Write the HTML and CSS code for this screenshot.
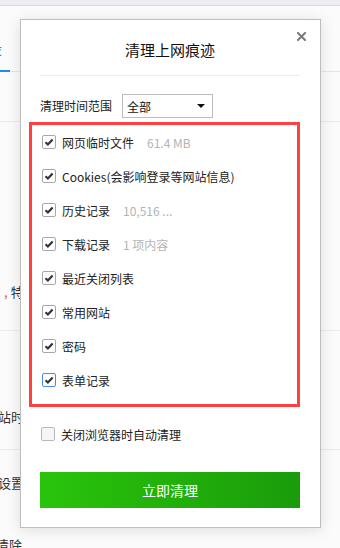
FILE: index.html
```html
<!DOCTYPE html>
<html lang="zh-CN">
<head>
<meta charset="utf-8">
<title>清理上网痕迹</title>
<link rel="stylesheet" href="styles.css">
</head>
<body>
<div class="page">
  <div class="topbar"></div>
  <div class="tabs"><span class="tab-active"><span class="tab-text">设</span></span></div>
  <div class="bg-sec s1"></div>
  <div class="bg-sec s2"><p class="bg-text"><span class="red">,</span>特别</p></div>
  <div class="bg-sec s3"><p class="bg-text t3">站时间</p></div>
  <div class="bg-sec s4"><p class="bg-text t4">设置选项</p><p class="bg-text t5">清除</p></div>

  <div class="dialog">
    <button class="close" aria-label="关闭">
      <svg width="9" height="9" viewBox="0 0 9 9"><path d="M1 1L8 8M8 1L1 8" stroke="#7a7a7a" stroke-width="2" stroke-linecap="square"/></svg>
    </button>
    <div class="header">清理上网痕迹</div>
    <div class="range">
      <span class="range-label">清理时间范围</span>
      <div class="select"><span>全部</span><svg class="caret" width="8" height="4" viewBox="0 0 8 4"><path d="M0 0H8L4 4Z" fill="#111"/></svg></div>
    </div>
    <div class="items">
      <label class="item"><span class="cb on"></span><span class="name">网页临时文件</span><span class="meta">61.4 MB</span></label>
      <label class="item"><span class="cb on"></span><span class="name">Cookies(会影响登录等网站信息)</span></label>
      <label class="item"><span class="cb on"></span><span class="name">历史记录</span><span class="meta">10,516 ...</span></label>
      <label class="item"><span class="cb on"></span><span class="name">下载记录</span><span class="meta">1 项内容</span></label>
      <label class="item"><span class="cb on"></span><span class="name">最近关闭列表</span></label>
      <label class="item"><span class="cb on"></span><span class="name">常用网站</span></label>
      <label class="item"><span class="cb on"></span><span class="name">密码</span></label>
      <label class="item"><span class="cb on focus"></span><span class="name">表单记录</span></label>
    </div>
    <label class="auto"><span class="cb off"></span><span class="name">关闭浏览器时自动清理</span></label>
    <button class="go">立即清理</button>
  </div>
</div>
</body>
</html>
```
FILE: styles.css
```css
* { box-sizing: border-box; }
html, body { margin: 0; padding: 0; }
body {
  width: 340px;
  height: 548px;
  overflow: hidden;
  font-family: "Noto Sans CJK SC", "Microsoft YaHei", sans-serif;
  color: #222;
  background: #fbfbfb;
}
.page {
  position: relative;
  width: 340px;
  height: 548px;
  overflow: hidden;
  background: #fbfbfb;
}
.topbar {
  height: 6px;
  background: #eeeef2;
  border-bottom: 1px solid #d9d9dd;
}
.tabs {
  height: 66px;
  border-bottom: 1px solid #e6e6e6;
  display: flex;
  align-items: flex-end;
}
.tab-active {
  display: block;
  width: 10px;
  height: 32px;
  border-bottom: 2px solid #1a8cf0;
  margin-bottom: -1px;
  overflow: visible;
  position: relative;
}
.tab-text {
  display: block;
  margin-left: -12px;
  font-size: 14px;
  line-height: 16px;
  color: #1a8cf0;
}
.bg-sec {
  border-bottom: 1px solid #ececec;
  font-size: 13px;
  color: #333;
}
.s1 { height: 50px; }
.s2 { height: 209px; padding-top: 161px; }
.s3 { height: 119px; padding-top: 77px; }
.s4 { height: 120px; padding-top: 24px; border-bottom: 0; }
.bg-text { margin: 0; line-height: 18px; white-space: nowrap; }
.bg-text .red { color: #f05a28; margin: 0 3px 0 4px; }
.t3, .t4 { margin-left: -2px; }
.t5 { margin-top: 44px; margin-left: -4px; }

.dialog {
  position: absolute;
  left: 20px;
  top: 19px;
  width: 301px;
  height: 509px;
  background: #fff;
  border: 1px solid #bdbdbd;
  box-shadow: 0 2px 14px rgba(0,0,0,0.12);
  padding: 20px 20px 0 19px;
  display: flex;
  flex-direction: column;
}
.close {
  position: absolute;
  top: 12px;
  right: 14px;
  width: 9px;
  height: 9px;
  padding: 0;
  border: 0;
  background: none;
  display: block;
}
.close svg { display: block; }
.header {
  height: 36px;
  line-height: 20px;
  padding-bottom: 15px;
  text-align: center;
  font-size: 15px;
  color: #111;
  border-bottom: 1px solid #ececec;
}
.range {
  margin-top: 18px;
  height: 24px;
  display: flex;
  align-items: center;
  gap: 10px;
}
.range-label { font-size: 12px; color: #222; line-height: 24px; }
.select {
  width: 91px;
  height: 24px;
  border: 1px solid #bcbcbc;
  display: flex;
  align-items: center;
  justify-content: space-between;
  padding: 0 7px 0 4px;
  font-size: 12px;
  color: #111;
}
.caret { display: block; }
.items {
  margin: 4px 0 0 -11px;
  width: 271px;
  border: 3px solid #ff4040;
  padding: 0 0 7px 10px;
}
.item, .auto {
  display: flex;
  align-items: center;
  height: 34px;
  font-size: 12px;
}
.cb {
  flex: none;
  width: 14px;
  height: 14px;
  border: 1px solid #a8a8a8;
  border-radius: 2px;
  background: #fff;
  margin-right: 6px;
}
.cb.on {
  background: #fff url("data:image/svg+xml,%3Csvg xmlns='http://www.w3.org/2000/svg' width='12' height='12' viewBox='0 0 12 12'%3E%3Cpath d='M2.5 6.2L4.9 8.5L9.6 3.6' fill='none' stroke='%23333' stroke-width='2.2'/%3E%3C/svg%3E") center/12px 12px no-repeat;
}
.cb.focus { border-color: #4a8af4; }
.cb.off { background: #f6f6f6; border-color: #b8b8b8; }
.name { color: #222; white-space: nowrap; }
.meta { color: #b4b4b4; margin-left: 13px; white-space: nowrap; }
.auto {
  margin-top: 10px;
  height: 34px;
  padding-left: 1px;
}
.go {
  margin-top: 21px;
  width: 260px;
  height: 36px;
  border: 0;
  padding: 0;
  background: linear-gradient(90deg, #2ac40c, #1a9c0a);
  color: #fff;
  font-family: inherit;
  font-size: 14px;
}
```
